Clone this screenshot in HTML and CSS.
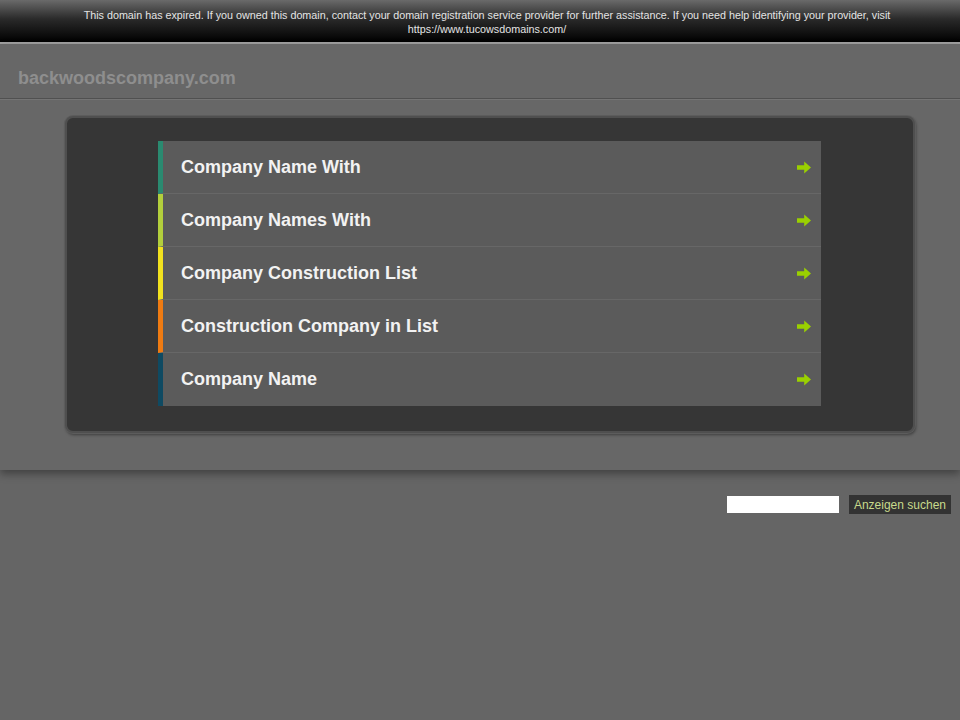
FILE: index.html
```html
<!DOCTYPE html>
<html lang="en">
<head>
    <meta charset="UTF-8">
    <meta name="viewport" content="width=device-width, initial-scale=1.0">
    <title>backwoodscompany.com</title>
    <link rel="stylesheet" href="styles.css">
</head>
<body>
    <div class="expired-bar">
        This domain has expired. If you owned this domain, contact your domain registration service provider for further assistance. If you need help identifying your provider, visit https://www.tucowsdomains.com/
    </div>
    <div class="main">
        <div class="header">
            <span class="domain">backwoodscompany.com</span>
        </div>
        <div class="content">
            <div class="box">
                <ul class="links">
                    <li class="c1"><a href="#">Company Name With</a><svg class="arrow" viewBox="0 0 14 13"><path d="M0 4.2h7.2V0.5L14 6.5l-6.8 6V8.8H0z"/></svg></li>
                    <li class="c2"><a href="#">Company Names With</a><svg class="arrow" viewBox="0 0 14 13"><path d="M0 4.2h7.2V0.5L14 6.5l-6.8 6V8.8H0z"/></svg></li>
                    <li class="c3"><a href="#">Company Construction List</a><svg class="arrow" viewBox="0 0 14 13"><path d="M0 4.2h7.2V0.5L14 6.5l-6.8 6V8.8H0z"/></svg></li>
                    <li class="c4"><a href="#">Construction Company in List</a><svg class="arrow" viewBox="0 0 14 13"><path d="M0 4.2h7.2V0.5L14 6.5l-6.8 6V8.8H0z"/></svg></li>
                    <li class="c5"><a href="#">Company Name</a><svg class="arrow" viewBox="0 0 14 13"><path d="M0 4.2h7.2V0.5L14 6.5l-6.8 6V8.8H0z"/></svg></li>
                </ul>
            </div>
        </div>
    </div>
    <div class="search">
        <input type="text" class="search-input">
        <button class="search-btn">Anzeigen suchen</button>
    </div>
</body>
</html>
```

FILE: styles.css
```css
body {
    font-family: "Liberation Sans", Arial, sans-serif;
    background-color: #656565;
    margin: 0;
    padding: 0;
}
.expired-bar {
    height: 44px;
    box-sizing: border-box;
    padding: 8px 63px 0 77px;
    background: linear-gradient(#6a6a6a, #2a2a2a 45%, #000000);
    border-bottom: 2px solid #a0a0a0;
    color: #e4e4e4;
    font-size: 10.75px;
    line-height: 14px;
    text-align: center;
}
.main {
    background-color: #676767;
    box-shadow: 0 4px 8px rgba(0, 0, 0, 0.35);
    padding-bottom: 37px;
}
.header {
    height: 55px;
    box-sizing: border-box;
    padding: 24px 18px 0;
    border-bottom: 1px solid #505050;
    box-shadow: 0 1px 0 #747474;
}
.domain {
    color: #8e8e8e;
    font-size: 18px;
    font-weight: bold;
}
.content {
    padding: 17px 45px 0 65px;
}
.box {
    background-color: #363636;
    border: 2px solid #4f4f4f;
    border-radius: 8px;
    box-shadow: 0 0 0 1px #5c5c5c, 1px 2px 3px rgba(0, 0, 0, 0.4);
    padding: 23px 92px 25px 91px;
}
.links {
    list-style: none;
    margin: 0;
    padding: 0;
}
.links li {
    display: flex;
    align-items: center;
    justify-content: space-between;
    height: 53px;
    box-sizing: border-box;
    background-color: #5b5b5b;
    border-left: 5px solid #2a8a70;
    border-bottom: 1px solid #676767;
    padding: 0 10px 0 18px;
}
.links li:last-child {
    border-bottom: none;
}
.links li.c2 { border-left-color: #b3cf3c; }
.links li.c3 { border-left-color: #f2e21e; }
.links li.c4 { border-left-color: #ef7b12; }
.links li.c5 { border-left-color: #0f4a62; }
.links a {
    color: #f2f2f2;
    text-decoration: none;
    font-size: 18px;
    font-weight: bold;
}
.arrow {
    width: 14px;
    height: 13px;
    fill: #9ad000;
}
.search {
    display: flex;
    justify-content: flex-end;
    align-items: center;
    gap: 10px;
    padding: 25px 9px 0 0;
}
.search-input {
    width: 112px;
    height: 17px;
    box-sizing: border-box;
    border: none;
    background-color: #ffffff;
    margin: 0;
}
.search-btn {
    height: 19px;
    padding: 0 5px;
    background-color: #333333;
    color: #c8da8c;
    border: none;
    font-family: "Liberation Sans", Arial, sans-serif;
    font-size: 12px;
    cursor: pointer;
}
```
